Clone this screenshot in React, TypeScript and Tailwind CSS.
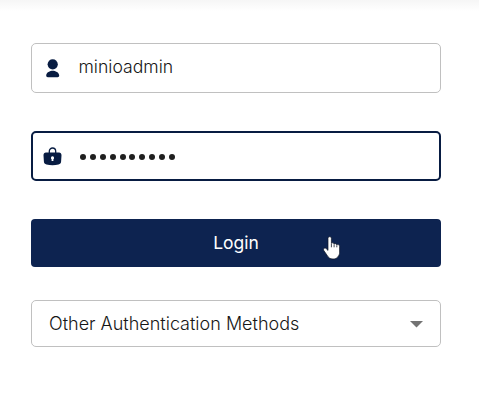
import React from "react";

function UserIcon() {
  return (
    <svg width="14" height="19" viewBox="0 0 14 19" fill="#081c42" aria-hidden="true">
      <circle cx="6.700" cy="5.300" r="5.100" />
      <path d="M6.700 11.700c2.500 0 6.500 1.500 6.500 4.900 0 1-.7 1.600-1.600 1.600H1.800c-.9 0-1.600-.6-1.600-1.600 0-3.400 4-4.900 6.500-4.900z" />
    </svg>
  );
}

function LockIcon() {
  return (
    <svg width="19" height="19" viewBox="0 0 19 19" aria-hidden="true">
      <path d="M6.300 7V4.200a3.200 3.200 0 0 1 6.400 0V7" fill="none" stroke="#081c42" strokeWidth="1.300" />
      <path d="M3 5.500h13c1.500 0 2.600 1.200 2.500 2.700l-.4 6.300c-.1 1.800-1 2.500-2.600 3-3.800 1.100-8.200 1.100-12 0-1.600-.5-2.500-1.200-2.600-3L.5 8.200C.4 6.700 1.500 5.500 3 5.500z" fill="#081c42" />
      <path d="M9.500 9.300a1.600 1.600 0 0 1 .9 2.900v1.700H8.600v-1.700a1.600 1.600 0 0 1 .9-2.900z" fill="#fff" />
    </svg>
  );
}

function HandPointer() {
  return (
    <svg className="absolute left-[291px] top-[17px]" width="19" height="25" viewBox="0 0 19 25" aria-hidden="true">
      <path
        d="M6 2.300c0-2.100 3.400-2.100 3.400 0v4.900c.7-.7 2.500-.4 2.700.8.700-.7 2.500-.4 2.700.9.900-.7 2.800-.2 2.800 1.300v6c0 3.800-2.700 6.800-6.600 6.800-3.100 0-4.700-1.500-6.100-4l-3.100-4.500c-1-1.800 1-3.300 2.400-1.900l1.800 1.800z"
        fill="#fff"
        stroke="#101522"
        strokeWidth=".7"
        strokeLinejoin="round"
      />
      <path d="M9.400 7.500v3.800M12.100 8.300v3M14.800 9.300v2" stroke="#101522" strokeWidth=".8" />
    </svg>
  );
}

export default function App() {
  return (
    <main className="flex h-[403px] w-[479px] flex-col bg-white font-['Inter',sans-serif] text-[#161616]">
      <div className="h-[11px] shrink-0 bg-linear-to-b from-[#f6f6f6] to-white" />
      <form className="flex flex-col pt-8 pl-[31px]">
        <div className="flex h-[50px] w-[410px] items-center rounded-[5px] border border-[#c0c0c0] pl-[14px]">
          <UserIcon />
          <span className="ml-[18.500px] -mt-[2px] text-[17.600px] font-light">minioadmin</span>
        </div>
        <div className="mt-[38px] flex h-[50px] w-[410px] items-center rounded-[5px] border-2 border-[#081c42] pl-[10px]">
          <LockIcon />
          <span className="mt-[2px] ml-[18px] flex h-2 items-center gap-[3.900px]" aria-label="Password">
            {Array.from({ length: 10 }, (_, i) => (
              <i key={i} className="size-[6px] rounded-full bg-[#1f1f1f]" />
            ))}
          </span>
        </div>
        <button type="button" className="relative mt-[38px] flex h-12 w-[410px] items-center justify-center rounded-[4px] bg-[#0d2350] text-[17.500px] text-white">
          Login
          <HandPointer />
        </button>
        <div className="mt-[33px] flex h-[47px] w-[410px] items-center justify-between rounded-[5px] border border-[#c0c0c0] pr-[17px] pl-[17px]">
          <span className="text-[18px] font-light">Other Authentication Methods</span>
          <svg className="mt-[2px]" width="13" height="7" viewBox="0 0 13 7" fill="#737373" aria-hidden="true">
            <path d="M0 0h13L6.500 6.500z" />
          </svg>
        </div>
      </form>
    </main>
  );
}
